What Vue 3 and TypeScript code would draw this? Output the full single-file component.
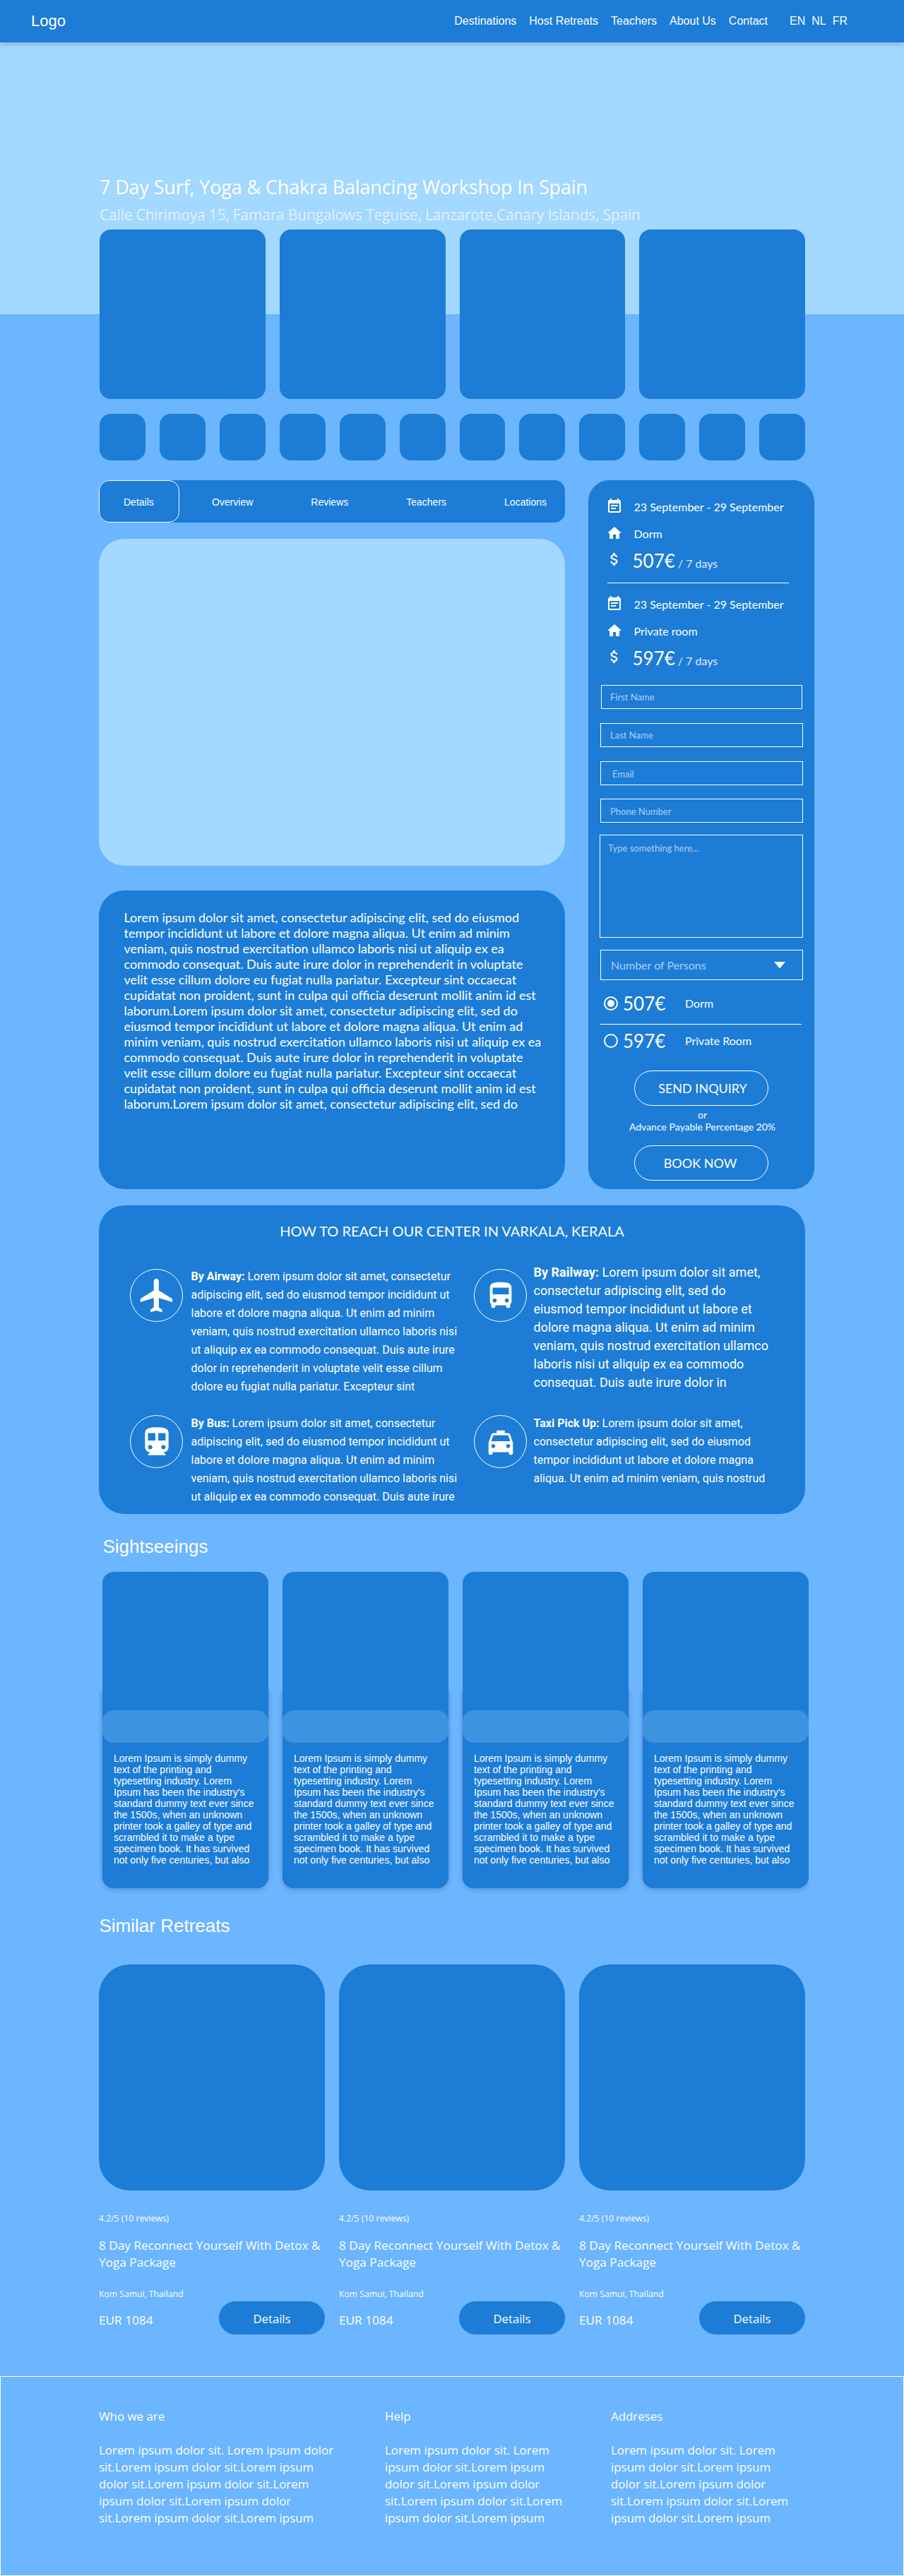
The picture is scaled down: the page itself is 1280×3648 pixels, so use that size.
<script setup lang="ts">
const navLinks = ['Destinations', 'Host Retreats', 'Teachers', 'About Us', 'Contact']
const languages = ['EN', 'NL', 'FR']
const tabs = ['Details', 'Overview', 'Reviews', 'Teachers', 'Locations']

interface Offer {
  dates: string
  room: string
  price: string
}

const offers: Offer[] = [
  { dates: '23 September - 29 September', room: 'Dorm', price: '507€' },
  { dates: '23 September - 29 September', room: 'Private room', price: '597€' },
]

const fields = [
  { id: 'first', label: 'First Name' },
  { id: 'last', label: 'Last Name' },
  { id: 'email', label: 'Email' },
  { id: 'phone', label: 'Phone Number' },
]

const rooms = [
  { price: '507€', label: 'Dorm', checked: true },
  { price: '597€', label: 'Private Room', checked: false },
]

const icons = {
  calendar:
    'M17 10H7v2h10v-2zM19 3h-1V1h-2v2H8V1H6v2H5c-1.11 0-1.99.9-1.99 2L3 19c0 1.1.89 2 2 2h14c1.1 0 2-.9 2-2V5c0-1.1-.9-2-2-2zm0 16H5V8h14v11zM14 14H7v2h7v-2z',
  home: 'M10 20v-6h4v6h5v-8h3L12 3 2 12h3v8z',
  money:
    'M11.8 10.9c-2.27-.59-3-1.2-3-2.15 0-1.09 1.01-1.85 2.7-1.85 1.78 0 2.44.85 2.5 2.1h2.21c-.07-1.72-1.12-3.3-3.21-3.81V3h-3v2.16c-1.94.42-3.5 1.68-3.5 3.61 0 2.31 1.91 3.46 4.7 4.13 2.5.6 3 1.48 3 2.41 0 .69-.49 1.79-2.7 1.79-2.06 0-2.87-.92-2.98-2.1h-2.2c.12 2.19 1.76 3.42 3.68 3.83V21h3v-2.15c1.95-.37 3.5-1.5 3.5-3.55 0-2.84-2.43-3.81-4.7-4.4z',
}

const routes = [
  {
    id: 'air',
    title: 'By Airway:',
    icon: 'M21 16v-2l-8-5V3.5c0-.83-.67-1.5-1.5-1.5S10 2.67 10 3.5V9l-8 5v2l8-2.5V19l-2 1.5V22l3.5-1 3.5 1v-1.5L13 19v-5.5l8 2.5z',
    lead: ' Lorem ipsum dolor sit amet, consectetur',
    text: `adipiscing elit, sed do eiusmod tempor incididunt ut
labore et dolore magna aliqua. Ut enim ad minim
veniam, quis nostrud exercitation ullamco laboris nisi
ut aliquip ex ea commodo consequat. Duis aute irure
dolor in reprehenderit in voluptate velit esse cillum
dolore eu fugiat nulla pariatur. Excepteur sint`,
  },
  {
    id: 'rail',
    title: 'By Railway:',
    icon: 'M4 16c0 .88.39 1.67 1 2.22V20c0 .55.45 1 1 1h1c.55 0 1-.45 1-1v-1h8v1c0 .55.45 1 1 1h1c.55 0 1-.45 1-1v-1.78c.61-.55 1-1.34 1-2.22V6c0-3.5-3.58-4-8-4s-8 .5-8 4v10zm3.5 1c-.83 0-1.5-.67-1.5-1.5S6.67 14 7.5 14s1.5.67 1.5 1.5S8.33 17 7.5 17zm9 0c-.83 0-1.5-.67-1.5-1.5s.67-1.5 1.5-1.5 1.5.67 1.5 1.5-.67 1.5-1.5 1.5zm1.5-6H6V6h12v5z',
    lead: ' Lorem ipsum dolor sit amet,',
    text: `consectetur adipiscing elit, sed do
eiusmod tempor incididunt ut labore et
dolore magna aliqua. Ut enim ad minim
veniam, quis nostrud exercitation ullamco
laboris nisi ut aliquip ex ea commodo
consequat. Duis aute irure dolor in`,
  },
  {
    id: 'bus',
    title: 'By Bus:',
    icon: 'M12 2c-4.42 0-8 .5-8 4v9.5C4 17.43 5.57 19 7.5 19L6 20.5v.5h12v-.5L16.5 19c1.93 0 3.5-1.57 3.5-3.5V6c0-3.5-3.58-4-8-4zM7.5 17c-.83 0-1.5-.67-1.5-1.5S6.67 14 7.5 14s1.5.67 1.5 1.5S8.33 17 7.5 17zm3.5-6H6V6h5v5zm5.5 6c-.83 0-1.5-.67-1.5-1.5s.67-1.5 1.5-1.5 1.5.67 1.5 1.5-.67 1.5-1.5 1.5zm1.5-6h-5V6h5v5z',
    lead: ' Lorem ipsum dolor sit amet, consectetur',
    text: `adipiscing elit, sed do eiusmod tempor incididunt ut
labore et dolore magna aliqua. Ut enim ad minim
veniam, quis nostrud exercitation ullamco laboris nisi
ut aliquip ex ea commodo consequat. Duis aute irure`,
  },
  {
    id: 'taxi',
    title: 'Taxi Pick Up:',
    icon: 'M18.92 6.01C18.72 5.42 18.16 5 17.5 5H15V3H9v2H6.5c-.66 0-1.21.42-1.42 1.01L3 12v8c0 .55.45 1 1 1h1c.55 0 1-.45 1-1v-1h12v1c0 .55.45 1 1 1h1c.55 0 1-.45 1-1v-8l-2.08-5.99zM6.5 16c-.83 0-1.5-.67-1.5-1.5S5.67 13 6.5 13s1.5.67 1.5 1.5S7.33 16 6.5 16zm11 0c-.83 0-1.5-.67-1.5-1.5s.67-1.5 1.5-1.5 1.5.67 1.5 1.5-.67 1.5-1.5 1.5zM5 11l1.5-4.5h11L19 11H5z',
    lead: ' Lorem ipsum dolor sit amet,',
    text: `consectetur adipiscing elit, sed do eiusmod
tempor incididunt ut labore et dolore magna
aliqua. Ut enim ad minim veniam, quis nostrud`,
  },
]

const description = `Lorem ipsum dolor sit amet, consectetur adipiscing elit, sed do eiusmod
tempor incididunt ut labore et dolore magna aliqua. Ut enim ad minim
veniam, quis nostrud exercitation ullamco laboris nisi ut aliquip ex ea
commodo consequat. Duis aute irure dolor in reprehenderit in voluptate
velit esse cillum dolore eu fugiat nulla pariatur. Excepteur sint occaecat
cupidatat non proident, sunt in culpa qui officia deserunt mollit anim id est
laborum.Lorem ipsum dolor sit amet, consectetur adipiscing elit, sed do
eiusmod tempor incididunt ut labore et dolore magna aliqua. Ut enim ad
minim veniam, quis nostrud exercitation ullamco laboris nisi ut aliquip ex ea
commodo consequat. Duis aute irure dolor in reprehenderit in voluptate
velit esse cillum dolore eu fugiat nulla pariatur. Excepteur sint occaecat
cupidatat non proident, sunt in culpa qui officia deserunt mollit anim id est
laborum.Lorem ipsum dolor sit amet, consectetur adipiscing elit, sed do`

const sightText = `Lorem Ipsum is simply dummy
text of the printing and
typesetting industry. Lorem
Ipsum has been the industry's
standard dummy text ever since
the 1500s, when an unknown
printer took a galley of type and
scrambled it to make a type
specimen book. It has survived
not only five centuries, but also`

const footerColumns = [
  {
    id: 'who',
    title: 'Who we are',
    text: `Lorem ipsum dolor sit. Lorem ipsum dolor
sit.Lorem ipsum dolor sit.Lorem ipsum
dolor sit.Lorem ipsum dolor sit.Lorem
ipsum dolor sit.Lorem ipsum dolor
sit.Lorem ipsum dolor sit.Lorem ipsum`,
  },
  {
    id: 'help',
    title: 'Help',
    text: `Lorem ipsum dolor sit. Lorem
ipsum dolor sit.Lorem ipsum
dolor sit.Lorem ipsum dolor
sit.Lorem ipsum dolor sit.Lorem
ipsum dolor sit.Lorem ipsum`,
  },
  {
    id: 'addresses',
    title: 'Addreses',
    text: `Lorem ipsum dolor sit. Lorem
ipsum dolor sit.Lorem ipsum
dolor sit.Lorem ipsum dolor
sit.Lorem ipsum dolor sit.Lorem
ipsum dolor sit.Lorem ipsum`,
  },
]
</script>

<template>
  <div class="page">
    <header class="topbar">
      <div class="logo">Logo</div>
      <nav class="nav">
        <a v-for="link in navLinks" :key="link">{{ link }}</a>
      </nav>
      <div class="langs">
        <a v-for="lang in languages" :key="lang">{{ lang }}</a>
      </div>
    </header>

    <main class="content">
      <h1 class="title">7 Day Surf, Yoga &amp; Chakra Balancing Workshop In Spain</h1>
      <p class="address">Calle Chirimoya 15, Famara Bungalows Teguise, Lanzarote,Canary Islands, Spain</p>

      <div class="gallery">
        <div v-for="n in 4" :key="n" class="photo"></div>
      </div>
      <div class="thumbs">
        <div v-for="n in 12" :key="n" class="thumb"></div>
      </div>

      <div class="columns">
        <div class="left">
          <div class="tabs">
            <a v-for="(tab, i) in tabs" :key="tab" class="tab" :class="{ active: i === 0 }">{{ tab }}</a>
          </div>
          <div class="video"></div>
          <div class="description">{{ description }}</div>
        </div>

        <aside class="booking">
          <section v-for="(offer, i) in offers" :key="offer.room" class="offer">
            <div v-if="i > 0" class="rule"></div>
            <div class="offer-row">
              <svg viewBox="0 0 24 24"><path :d="icons.calendar" /></svg>
              <span>{{ offer.dates }}</span>
            </div>
            <div class="offer-row home">
              <svg viewBox="0 0 24 24"><path :d="icons.home" /></svg>
              <span>{{ offer.room }}</span>
            </div>
            <div class="offer-row cost">
              <svg viewBox="0 0 24 24"><path :d="icons.money" /></svg>
              <span class="amount"><b class="price">{{ offer.price }}</b><small>/ 7 days</small></span>
            </div>
          </section>

          <form class="form">
            <div v-for="field in fields" :key="field.id" class="field" :class="field.id">{{ field.label }}</div>
            <div class="message">Type something here...</div>
            <div class="select">
              <span>Number of Persons</span>
              <svg viewBox="0 0 16 10"><path d="M0 0h16L8 9.5z" /></svg>
            </div>
            <template v-for="(room, i) in rooms" :key="room.label">
              <div v-if="i > 0" class="room-rule"></div>
              <div class="room">
                <svg viewBox="0 0 24 24">
                  <circle class="ring" cx="12" cy="12" r="9" />
                  <circle v-if="room.checked" cx="12" cy="12" r="5" />
                </svg>
                <b class="price">{{ room.price }}</b>
                <span>{{ room.label }}</span>
              </div>
            </template>
            <div class="pill send">SEND INQUIRY</div>
            <div class="advance">or<br />Advance Payable Percentage 20%</div>
            <div class="pill book">BOOK NOW</div>
          </form>
        </aside>
      </div>

      <section class="reach">
        <h2>HOW TO REACH OUR CENTER IN VARKALA, KERALA</h2>
        <div class="routes">
          <div v-for="route in routes" :key="route.id" class="route" :class="route.id">
            <div class="badge">
              <svg viewBox="0 0 24 24"><path :d="route.icon" /></svg>
            </div>
            <div class="route-text">
              <p><strong>{{ route.title }}</strong><span>{{ route.lead }}</span></p>
              <p>{{ route.text }}</p>
            </div>
          </div>
        </div>
      </section>

      <h2 class="heading sights-heading">Sightseeings</h2>
      <div class="sights">
        <article v-for="n in 4" :key="n" class="sight">
          <div class="band"></div>
          <p>{{ sightText }}</p>
        </article>
      </div>

      <h2 class="heading retreats-heading">Similar Retreats</h2>
      <div class="retreats">
        <article v-for="n in 3" :key="n" class="retreat">
          <div class="cover"></div>
          <div class="small rating">4.2/5 (10 reviews)</div>
          <h3>8 Day Reconnect Yourself With Detox &amp;<br />Yoga Package</h3>
          <div class="small place">Kom Samui, Thailand</div>
          <div class="buy">
            <span>EUR 1084</span>
            <a class="details">Details</a>
          </div>
        </article>
      </div>
    </main>

    <footer class="footer">
      <div v-for="col in footerColumns" :key="col.id" class="foot-col" :class="col.id">
        <h4>{{ col.title }}</h4>
        <p>{{ col.text }}</p>
      </div>
    </footer>
  </div>
</template>

<style>
body {
  margin: 0;
}
</style>

<style scoped>
.page {
  --blue: #1c7cd6;
  --sky: #a3d8ff;
  --base: #6cb5ff;
  width: 1280px;
  height: 3648px;
  overflow: hidden;
  color: #fff;
  font-family: "Liberation Sans", Arial, sans-serif;
  background: linear-gradient(var(--sky) 0 445px, var(--base) 445px);
  box-sizing: border-box;
}
.page *,
.page *::before {
  box-sizing: border-box;
}
h1,
h2,
h3,
h4,
p {
  margin: 0;
  font-weight: 400;
  white-space: pre;
}
svg {
  display: block;
  fill: #fff;
  flex: none;
}

/* Top bar */
.topbar {
  display: flex;
  height: 60px;
  padding: 0 80px 0 44px;
  line-height: 60px;
  font-size: 16px;
  background: var(--blue);
  box-shadow: 0 3px 6px rgba(0, 0, 0, 0.16);
}
.logo {
  font-size: 22px;
}
.nav {
  display: flex;
  gap: 18px;
  margin-left: auto;
}
.langs {
  display: flex;
  gap: 9px;
  margin-left: 31px;
}

/* Intro */
.content {
  width: 1000px;
  margin: 0 140px;
  padding-top: 186px;
}
.title {
  padding-left: 1px;
  line-height: 38px;
  font-family: "Open Sans", sans-serif;
  font-size: 27px;
  letter-spacing: -0.15px;
}
.address {
  margin-top: 5px;
  padding-left: 1px;
  line-height: 30px;
  font-family: "Open Sans", sans-serif;
  font-size: 21px;
  letter-spacing: -0.19px;
  opacity: 0.66;
}
.gallery {
  display: flex;
  gap: 20px;
  margin: 6px 0 0 1px;
}
.photo {
  width: 235px;
  height: 240px;
  border-radius: 16px;
  background: var(--blue);
}
.thumbs {
  display: flex;
  gap: 20px;
  margin: 21px 0 0 1px;
}
.thumb {
  width: 65px;
  height: 66px;
  border-radius: 16px;
  background: var(--blue);
}

/* Details column */
.columns {
  display: flex;
  gap: 33px;
  width: 1013px;
  margin-top: 28px;
}
.left {
  width: 660px;
}
.tabs {
  display: flex;
  gap: 82px;
  height: 60px;
  border-radius: 15px;
  font-size: 14px;
  line-height: 62px;
  background: var(--blue);
}
.tab.active {
  width: 114px;
  height: 60px;
  margin-right: -36px;
  padding-left: 34px;
  border: 1px solid #fff;
  border-radius: 15px;
  line-height: 60px;
}
.video {
  height: 463px;
  margin-top: 23px;
  border-radius: 36px;
  background: var(--sky);
}
.description {
  height: 423px;
  margin-top: 35px;
  padding: 27px 0 0 35.5px;
  border-radius: 36px;
  font: 18px/22px Lato, sans-serif;
  white-space: pre;
  background: var(--blue);
}

/* Booking card */
.booking {
  width: 320px;
  height: 1004px;
  padding-top: 25px;
  border-radius: 30px;
  font: 16px/24px Lato, sans-serif;
  background: var(--blue);
}
.offer {
  padding-left: 25px;
}
.rule {
  width: 257px;
  height: 1px;
  margin: 21px 0 17px 2px;
  background: #fff;
}
.offer-row {
  display: flex;
  gap: 15.5px;
  height: 24px;
}
.offer-row svg {
  width: 24px;
  height: 24px;
}
.offer-row span {
  margin-top: 1px;
}
.offer-row.home {
  margin-top: 14px;
}
.offer-row.cost {
  margin-top: 13px;
}
.offer-row .amount {
  display: flex;
  align-items: baseline;
  gap: 4px;
  height: 24px;
  margin: 2px 0 0 -2px;
}
.price {
  font-size: 26px;
  font-weight: 400;
}
.amount small {
  font-size: 16px;
  opacity: 0.85;
}
.form {
  display: flex;
  flex-direction: column;
  align-items: flex-start;
  margin: 28px 0 0 17px;
}
.field {
  width: 287px;
  height: 34px;
  margin-top: 20px;
  padding-left: 13px;
  border: 1px solid #fff;
  font-size: 13px;
  line-height: 32px;
  color: rgba(255, 255, 255, 0.65);
}
.field.first {
  width: 285px;
  margin: 0 0 0 1px;
  padding-left: 12px;
}
.field.email {
  padding: 1px 0 0 16px;
}
.field.phone {
  margin-top: 19px;
  padding-top: 1px;
}
.message {
  width: 288px;
  height: 146px;
  margin: 17px 0 0 -1px;
  padding: 10px 11px;
  border: 1px solid #fff;
  font-size: 13px;
  line-height: 16px;
  color: rgba(255, 255, 255, 0.65);
}
.select {
  display: flex;
  justify-content: space-between;
  align-items: center;
  width: 287px;
  height: 43px;
  margin-top: 17px;
  padding: 0 24px 0 14px;
  border: 1px solid #fff;
  line-height: 41px;
  color: rgba(255, 255, 255, 0.65);
}
.select svg {
  width: 16px;
  height: 10px;
  margin-top: 1px;
}
.room {
  display: flex;
  height: 24px;
  margin: 21px 0 0 3px;
}
.room svg {
  width: 24px;
  height: 24px;
}
.ring {
  fill: none;
  stroke: #fff;
  stroke-width: 2;
}
.room .price {
  width: 88px;
  margin-left: 5px;
}
.room-rule {
  width: 285px;
  height: 1px;
  margin-top: 17px;
  background: #fff;
}
.room-rule + .room {
  margin-top: 11px;
}
.pill {
  width: 190px;
  height: 50px;
  margin-left: 48px;
  border: 1px solid #fff;
  border-radius: 25px;
  text-align: center;
  font-size: 18px;
  line-height: 48px;
}
.pill.send {
  margin-top: 30px;
  padding-left: 4px;
}
.advance {
  width: 289px;
  margin-top: 4px;
  font-size: 14px;
  line-height: 17px;
  text-align: center;
}
.pill.book {
  margin-top: 18px;
  padding-right: 3px;
}

/* Directions */
.reach {
  height: 437px;
  margin-top: 23px;
  padding-top: 24px;
  border-radius: 36px;
  background: var(--blue);
}
.reach h2 {
  font: 20px/24px Lato, sans-serif;
  text-align: center;
}
.routes {
  display: grid;
  grid-template: 214px auto / 487px auto;
  margin: 34px 0 0 44px;
}
.route {
  display: flex;
  gap: 11.5px;
  font: 16px/26px Roboto, sans-serif;
}
.route.air .route-text {
  margin-top: 6px;
}
.route.rail {
  font-size: 18px;
}
.route.rail,
.route.taxi {
  gap: 9.5px;
}
.route strong {
  font-weight: 700;
}
.badge {
  display: flex;
  flex: none;
  align-items: center;
  justify-content: center;
  width: 75px;
  height: 75px;
  margin-top: 1px;
  border: 1px solid #fff;
  border-radius: 50%;
}
.air .badge,
.rail .badge {
  margin-top: 8px;
}
.badge svg {
  width: 46px;
  height: 46px;
}
.air .badge svg {
  width: 57px;
  height: 57px;
  margin-left: 2px;
}
.bus .badge svg {
  width: 50px;
  height: 50px;
}
.taxi .badge svg {
  margin-top: 2px;
}

/* Sightseeing */
.heading {
  font-size: 26px;
  line-height: 30px;
}
.sights-heading {
  margin: 31px 0 0 5.5px;
}
.sights {
  display: flex;
  gap: 20px;
  width: 1000px;
  margin: 21px 0 0 5px;
}
.sight {
  position: relative;
  isolation: isolate;
  width: 235px;
  height: 448px;
  padding-top: 196px;
  border-radius: 16px;
  background: var(--blue);
}
.sight::before {
  content: "";
  position: absolute;
  z-index: -1;
  inset: 167px 0 0;
  border-radius: 0 0 16px 16px;
  background: var(--blue);
  box-shadow: 0 3px 6px rgba(0, 0, 0, 0.16), 0 -8px 6px rgba(0, 0, 0, 0.12);
  clip-path: inset(0 -12px -14px -12px);
}
.sight:last-child::before {
  clip-path: inset(0 0 -14px -12px);
}
.band {
  height: 46px;
  border-radius: 16px;
  background: rgba(163, 216, 255, 0.25);
}
.sight p {
  padding: 14px 16px 0;
  font-size: 14px;
  line-height: 16px;
}

/* Similar retreats */
.retreats-heading {
  margin: 38px 0 0 0.5px;
}
.retreats {
  display: flex;
  gap: 20px;
  margin-top: 40px;
}
.retreat {
  width: 320px;
  font-family: "Open Sans", sans-serif;
}
.cover {
  height: 320px;
  border-radius: 44px;
  background: var(--blue);
}
.small {
  font-size: 12.2px;
  line-height: 18px;
}
.rating {
  margin-top: 31px;
}
.retreat h3 {
  margin-top: 17px;
  font-size: 17.2px;
  line-height: 24px;
}
.place {
  margin-top: 24px;
}
.buy {
  display: flex;
  justify-content: space-between;
  margin-top: 1px;
  font-size: 17.2px;
  line-height: 24px;
}
.buy span {
  margin-top: 15px;
}
.details {
  width: 150px;
  height: 47px;
  border-radius: 24px;
  text-align: center;
  font-size: 16.7px;
  line-height: 49px;
  background: var(--blue);
}

/* Footer */
.footer {
  display: flex;
  height: 283px;
  margin-top: 59px;
  padding: 44px 0 0 139px;
  border: 1px solid #fff;
  font: 16.9px/24px "Open Sans", sans-serif;
}
.foot-col {
  width: 320px;
}
.foot-col.who {
  width: 405px;
}
.foot-col p {
  margin-top: 24px;
}
</style>
